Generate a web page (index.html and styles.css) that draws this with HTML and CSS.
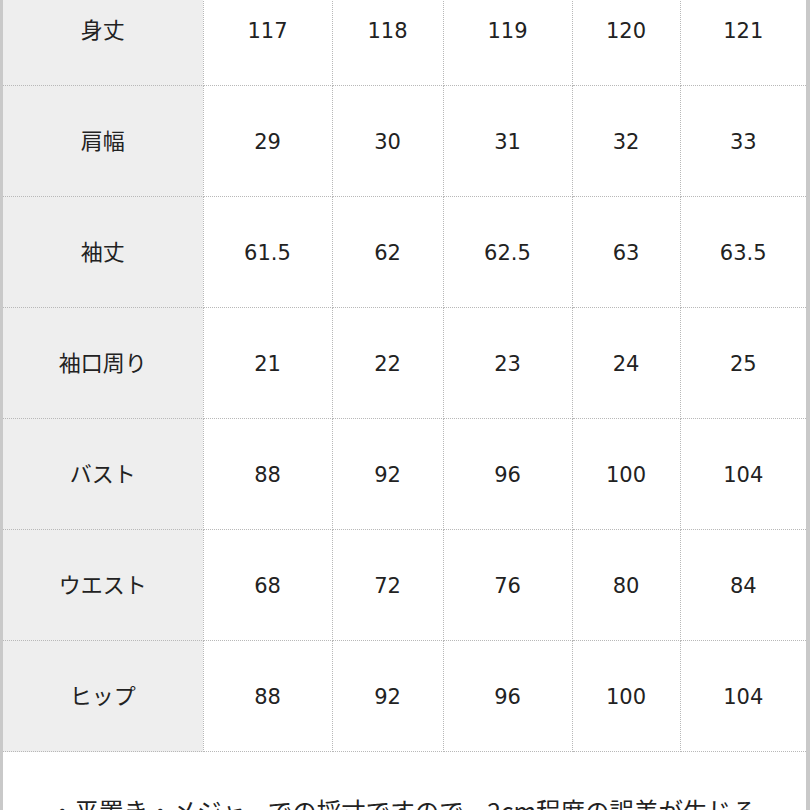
FILE: index.html
```html
<!DOCTYPE html>
<html lang="ja">
<head>
<meta charset="utf-8">
<title>サイズ表</title>
<link rel="stylesheet" href="styles.css">
</head>
<body>
<div class="frame">
  <table class="size-table">
    <colgroup>
      <col class="c-head">
      <col class="c-a">
      <col class="c-b">
      <col class="c-a">
      <col class="c-c">
      <col class="c-d">
    </colgroup>
    <tbody>
      <tr><th>身丈</th><td>117</td><td>118</td><td>119</td><td>120</td><td>121</td></tr>
      <tr><th>肩幅</th><td>29</td><td>30</td><td>31</td><td>32</td><td>33</td></tr>
      <tr><th>袖丈</th><td>61.5</td><td>62</td><td>62.5</td><td>63</td><td>63.5</td></tr>
      <tr><th>袖口周り</th><td>21</td><td>22</td><td>23</td><td>24</td><td>25</td></tr>
      <tr><th>バスト</th><td>88</td><td>92</td><td>96</td><td>100</td><td>104</td></tr>
      <tr><th>ウエスト</th><td>68</td><td>72</td><td>76</td><td>80</td><td>84</td></tr>
      <tr><th>ヒップ</th><td>88</td><td>92</td><td>96</td><td>100</td><td>104</td></tr>
    </tbody>
  </table>
  <p class="note">・平置き・メジャーでの採寸ですので、2cm程度の誤差が生じる<br>場合がございます。</p>
</div>
</body>
</html>
```
FILE: styles.css
```css
html, body {
  margin: 0;
  padding: 0;
  background: #ffffff;
}
body {
  width: 810px;
  height: 810px;
  overflow: hidden;
  font-family: "DejaVu Sans", "Noto Sans CJK JP", sans-serif;
  color: #222222;
}
.frame {
  box-sizing: border-box;
  width: 810px;
  height: 900px;
  margin-top: -26px;
  border-left: 3px solid #c9c9c9;
  border-right: 4px solid #c9c9c9;
  background: #ffffff;
}
.size-table {
  width: 803px;
  table-layout: fixed;
  border-collapse: collapse;
}
.c-head { width: 200px; }
.c-a { width: 129px; }
.c-b { width: 111px; }
.c-c { width: 108px; }
.c-d { width: 126px; }
.size-table th,
.size-table td {
  padding: 0;
  border: 1px dotted #b8b8b8;
  text-align: center;
  vertical-align: middle;
  font-size: 21px;
  font-weight: normal;
  line-height: 1;
  color: #222222;
}
.size-table td {
  height: 108px;
  padding-top: 2px;
}
.size-table th {
  height: 106px;
  background: #eeeeee;
  font-family: "Noto Sans CJK JP", sans-serif;
  font-size: 22px;
  padding-bottom: 4px;
  border-left: none;
}
.size-table td:last-child {
  border-right: none;
}
.note {
  margin: 0;
  padding: 41px 0 0 47px;
  font-family: "Noto Sans CJK JP", sans-serif;
  font-size: 24.5px;
  line-height: 36px;
  white-space: nowrap;
  color: #222222;
}
```
